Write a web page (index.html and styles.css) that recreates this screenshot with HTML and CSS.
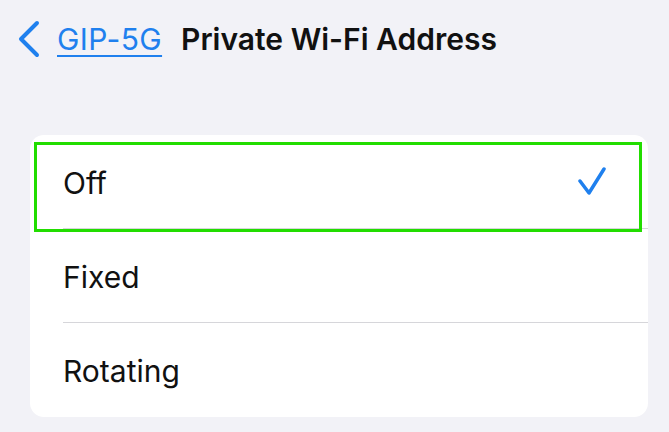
FILE: index.html
```html
<!DOCTYPE html>
<html lang="en">
<head>
  <meta charset="UTF-8" />
  <title>Private Wi-Fi Address</title>
  <link rel="stylesheet" href="styles.css">
</head>
<body>

  <header class="nav">
    <a class="back" href="#">
      <svg class="chevron" width="24" height="38" viewBox="0 0 24 38">
        <path d="M20 3 L4 19 L20 35" />
      </svg>
      <span class="back-label">GIP-5G</span>
    </a>
    <h1 class="title">Private Wi-Fi Address</h1>
  </header>

  <ul class="card">
    <li class="row selected">
      <span class="label">Off</span>
      <svg class="check" width="30" height="30" viewBox="0 0 30 30">
        <path d="M3 14 L12 26 L27 2" />
      </svg>
      <div class="highlight"></div>
    </li>
    <li class="row">
      <span class="label">Fixed</span>
    </li>
    <li class="row">
      <span class="label">Rotating</span>
    </li>
  </ul>

</body>
</html>
```

FILE: styles.css
```css
body {
  margin: 0;
  background: #F2F2F7;
  font-family: Inter, 'Liberation Sans', Arial, sans-serif;
  color: #111111;
}

.nav {
  display: flex;
  align-items: center;
  height: 80px;
  padding-left: 17px;
  box-sizing: border-box;
  padding-bottom: 2px;
}

.back {
  display: flex;
  align-items: center;
  text-decoration: none;
  margin-right: 19px;
}

.chevron path {
  fill: none;
  stroke: #1F80EE;
  stroke-width: 4;
  stroke-linecap: round;
  stroke-linejoin: round;
}

.back-label {
  margin-left: 16px;
  color: #1F80EE;
  font-size: 30px;
  letter-spacing: 0.4px;
  text-decoration: underline;
  text-decoration-thickness: 2px;
  text-underline-offset: 5px;
}

.title {
  margin: 0;
  font-size: 30px;
  font-weight: 600;
  color: #111111;
}

.card {
  list-style: none;
  margin: 55px 21px 0 30px;
  padding: 0;
  background: #FFFFFF;
  border-radius: 14px;
}

.row {
  position: relative;
  display: flex;
  align-items: center;
  justify-content: space-between;
  height: 94px;
  padding: 0 41px 0 33px;
}

.row + .row::before {
  content: "";
  position: absolute;
  top: -1px;
  left: 33px;
  right: 0;
  border-top: 1px solid #D6D6DA;
}

.label {
  font-size: 30px;
  padding-top: 2px;
}

.check path {
  fill: none;
  stroke: #1F80EE;
  stroke-width: 3.5;
  stroke-linecap: round;
  stroke-linejoin: round;
}

/* green outline drawn over the selected row */
.highlight {
  position: absolute;
  z-index: 1;
  top: 7px;
  left: 4px;
  right: 6px;
  bottom: -3px;
  border: 3.5px solid #22DD00;
  pointer-events: none;
}
```
